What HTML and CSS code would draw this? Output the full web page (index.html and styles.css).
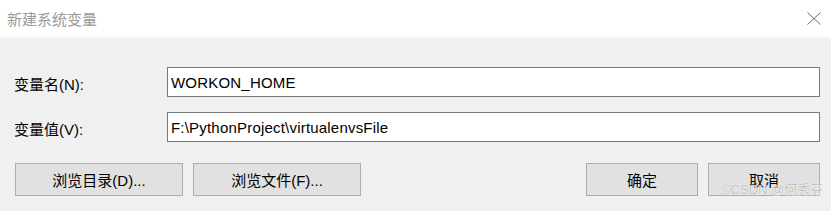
FILE: index.html
```html
<!DOCTYPE html>
<html lang="zh-CN">
<head>
<meta charset="utf-8">
<title>新建系统变量</title>
<link rel="stylesheet" href="styles.css">
</head>
<body>
<div class="dialog">
  <div class="titlebar">
    <span class="title">新建系统变量</span>
    <svg class="close" width="14" height="13" viewBox="0 0 14 13"><path d="M0.5 0.5 L13.5 12.5 M13.5 0.5 L0.5 12.5" stroke="#6a6a6a" stroke-width="1" fill="none"/></svg>
  </div>
  <div class="content">
    <div class="fields">
      <label class="label">变量名(N):</label>
      <div class="input">WORKON_HOME</div>
      <label class="label">变量值(V):</label>
      <div class="input">F:\PythonProject\virtualenvsFile</div>
    </div>
    <div class="buttons">
      <div class="group">
        <button class="btn wide">浏览目录(D)...</button>
        <button class="btn wide">浏览文件(F)...</button>
      </div>
      <div class="group">
        <button class="btn">确定</button>
        <button class="btn">取消</button>
      </div>
    </div>
  </div>
  <div class="watermark">©CSDN @何秀芬</div>
</div>
</body>
</html>
```

FILE: styles.css
```css
* { box-sizing: border-box; }
html, body { margin: 0; padding: 0; }
body {
  width: 831px;
  height: 211px;
  overflow: hidden;
  font-family: "Liberation Sans", "Noto Sans CJK SC", sans-serif;
  font-size: 15px;
  color: #000;
  background: #f0f0f0;
}
.dialog {
  position: relative;
  width: 831px;
  height: 211px;
}
.titlebar {
  height: 38px;
  background: #fff;
  border-bottom: 1px solid #f7f7f7;
  display: flex;
  align-items: center;
  justify-content: space-between;
  padding: 0 10px 1px 7px;
}
.title {
  color: #9a9a9a;
  font-size: 15px;
}
.content {
  padding: 29px 11px 0 14px;
}
.fields {
  display: grid;
  grid-template-columns: 153px 653px;
  row-gap: 15px;
  align-items: center;
}
.label {
  font-size: 15px;
  padding-top: 2px;
}
.input {
  height: 30px;
  background: #fff;
  border: 1px solid #7a7a7a;
  padding: 0 4px 0 3px;
  display: flex;
  align-items: center;
  font-size: 15px;
  letter-spacing: 0.2px;
  white-space: nowrap;
}
.buttons {
  display: flex;
  justify-content: space-between;
  margin-top: 21px;
  padding-left: 1px;
}
.group {
  display: flex;
  gap: 10px;
}
.btn {
  height: 33px;
  width: 112px;
  background: #e1e1e1;
  border: 1px solid #adadad;
  font-family: inherit;
  font-size: 15px;
  color: #000;
  padding: 0;
}
.btn.wide { width: 168px; }
.watermark {
  position: absolute;
  left: 721px;
  top: 182px;
  font-size: 13px;
  line-height: 16px;
  color: rgba(150, 150, 150, 0.6);
  text-shadow: 0 0 1px #fff, 0 0 1px #fff;
  white-space: nowrap;
}
```
